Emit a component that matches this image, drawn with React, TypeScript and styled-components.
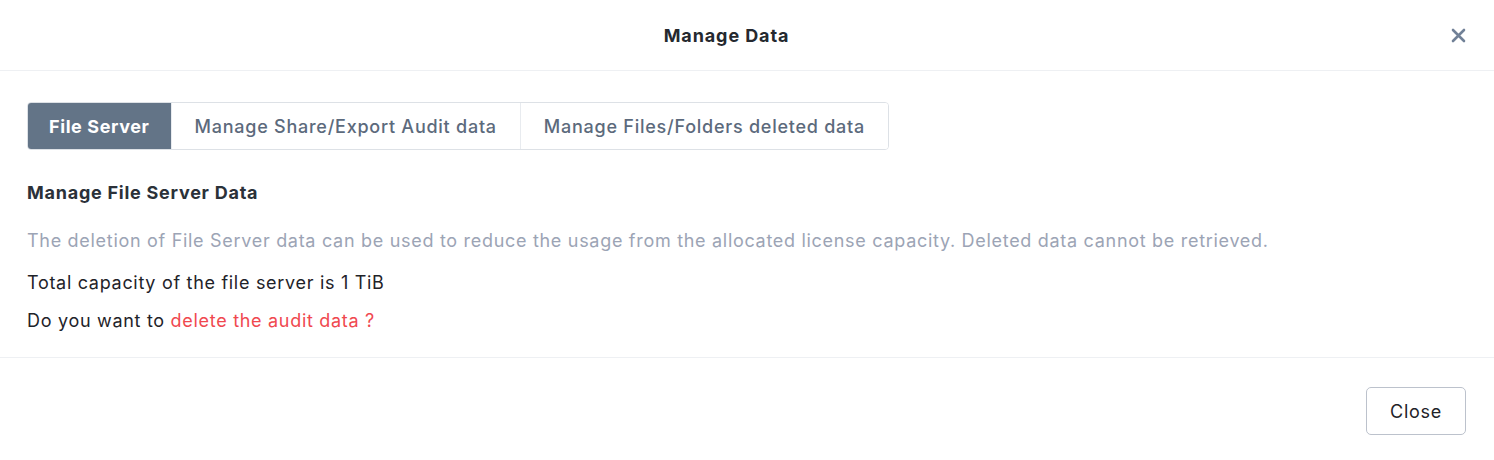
import styled, { createGlobalStyle } from "styled-components"

const GlobalStyle = createGlobalStyle`
  body {
    margin: 0;
    background: #ffffff;
    font-family: "Inter", "Liberation Sans", sans-serif;
    letter-spacing: 0.7px;
    -webkit-font-smoothing: antialiased;
  }
`

const Modal = styled.div`
  width: 1494px;
  height: 460px;
  display: flex;
  flex-direction: column;
  background: #fff;
`

const Header = styled.div`
  height: 71px;
  box-sizing: border-box;
  display: flex;
  align-items: center;
  padding: 0 28px 0 27px;
  border-bottom: 1px solid #eef0f3;
`

const Title = styled.h2`
  flex: 1;
  margin: 0;
  text-align: center;
  font-size: 18px;
  font-weight: 700;
  color: #25292f;
  letter-spacing: 0.9px;
`

const CloseX = styled.button`
  width: 40px;
  height: 24px;
  padding: 0;
  border: none;
  background: none;
  display: flex;
  align-items: center;
  justify-content: flex-end;
  cursor: pointer;
`

const Body = styled.div`
  padding: 31px 27px 24px;
  border-bottom: 1px solid #eef0f3;
`

const Tabs = styled.div`
  display: inline-flex;
  height: 48px;
  box-sizing: border-box;
  border: 1px solid #dde1e6;
  border-radius: 4px;
  overflow: hidden;
`

const Tab = styled.button<{ $active?: boolean }>`
  padding: 0 23px;
  border: none;
  border-left: 1px solid #e8ebef;
  background: ${(p) => (p.$active ? "#637487" : "#fff")};
  color: ${(p) => (p.$active ? "#ffffff" : "#5c6a7c")};
  font-family: inherit;
  letter-spacing: 0.75px;
  font-size: 18px;
  font-weight: ${(p) => (p.$active ? 700 : 500)};
  cursor: pointer;

  &:first-child {
    border-left: none;
    padding: 0 21px;
    letter-spacing: 0.6px;
  }
`

const Heading = styled.h3`
  margin: 31px 0 0;
  line-height: 24px;
  font-size: 18px;
  font-weight: 700;
  color: #2b3139;
  letter-spacing: 0.75px;
`

const Line = styled.p<{ $muted?: boolean; $gap: number }>`
  margin: ${(p) => p.$gap}px 0 0;
  line-height: 24px;
  font-size: 18px;
  color: ${(p) => (p.$muted ? "#9ca4b5" : "#1f2329")};
`

const Danger = styled.span`
  color: #f0484f;
`

const Footer = styled.div`
  display: flex;
  justify-content: flex-end;
  padding: 29px 28px 25px;
`

const CloseButton = styled.button`
  width: 100px;
  height: 48px;
  border: 1px solid #bcc2cc;
  border-radius: 5px;
  background: #fff;
  color: #1f2329;
  font-family: inherit;
  letter-spacing: 0.7px;
  font-size: 18px;
  cursor: pointer;
`

export default function App() {
  return (
    <>
      <GlobalStyle />
      <Modal>
        <Header>
          <Title>Manage Data</Title>
          <CloseX aria-label="Close">
            <svg width="15" height="15" viewBox="0 0 15 15">
              <path d="M2 2 L13 13 M13 2 L2 13" stroke="#718197" strokeWidth="2.6" strokeLinecap="round" />
            </svg>
          </CloseX>
        </Header>
        <Body>
          <Tabs>
            <Tab $active>File Server</Tab>
            <Tab>Manage Share/Export Audit data</Tab>
            <Tab>Manage Files/Folders deleted data</Tab>
          </Tabs>
          <Heading>Manage File Server Data</Heading>
          <Line $muted $gap={24}>
            The deletion of File Server data can be used to reduce the usage from the allocated license capacity. Deleted data cannot be retrieved.
          </Line>
          <Line $gap={18}>Total capacity of the file server is 1 TiB</Line>
          <Line $gap={14}>
            Do you want to <Danger>delete the audit data ?</Danger>
          </Line>
        </Body>
        <Footer>
          <CloseButton>Close</CloseButton>
        </Footer>
      </Modal>
    </>
  )
}
